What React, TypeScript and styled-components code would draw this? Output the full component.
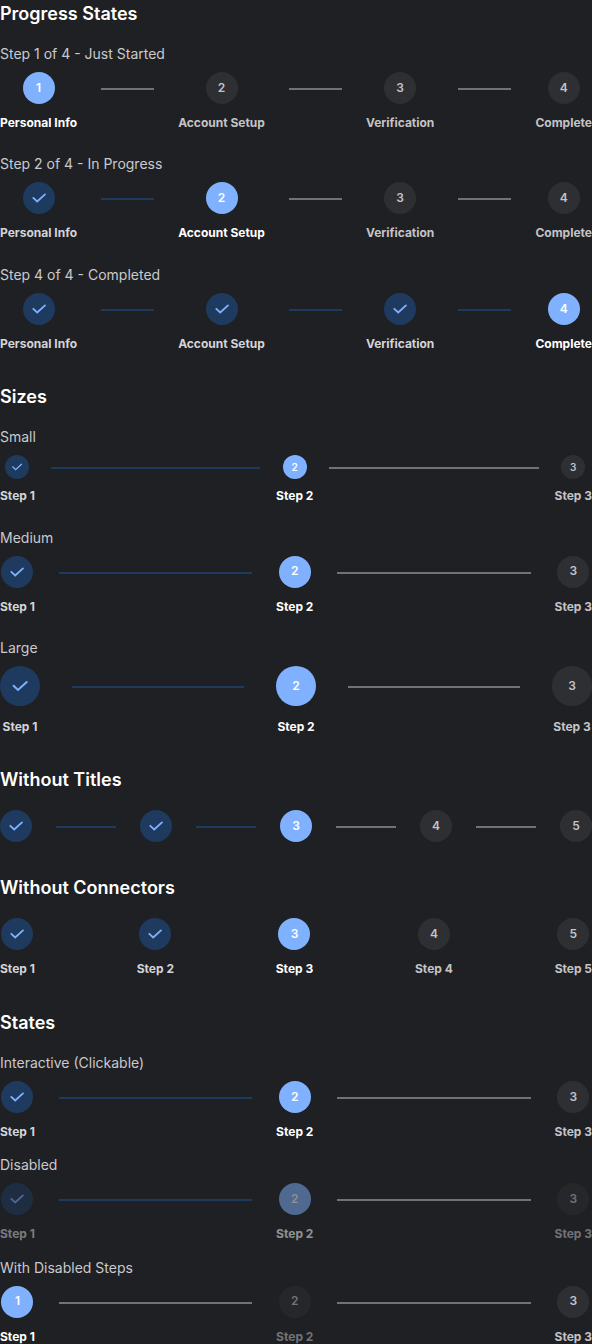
import React from "react";
import styled, { createGlobalStyle } from "styled-components";

type Size = "small" | "medium" | "large";
type Status = "completed" | "active" | "pending";

const metrics = {
  small: { circle: 24, gap: 10, connector: 16, font: 10, icon: 12 },
  medium: { circle: 32, gap: 12, connector: 24, font: 12, icon: 16 },
  large: { circle: 40, gap: 14, connector: 32, font: 12, icon: 18 },
};

const circleColor = { completed: "#1e3a5f", active: "#80b1ff", pending: "#2e2f33" };
const numberColor = { completed: "#80b1ff", active: "#ffffff", pending: "#c4c4c8" };
const titleColor = { completed: "#d4d4d8", active: "#ffffff", pending: "#c4c4c8" };

const GlobalStyle = createGlobalStyle`
  body {
    margin: 0;
    background: #1f2023;
    font-family: Inter, "Liberation Sans", sans-serif;
    overflow-x: hidden;
  }
`;

const Page = styled.main`
  display: flex;
  flex-direction: column;
  gap: 32px;
  height: 1344px;
  overflow: hidden;
`;

const SectionBox = styled.section<{ $gap: number }>`
  display: flex;
  flex-direction: column;
  flex-shrink: 0;
  gap: ${(p) => p.$gap}px;
`;

const Heading = styled.h3<{ $gap: number }>`
  margin: 0 0 ${(p) => 16 - p.$gap}px;
  font-size: 18px;
  line-height: 28px;
  font-weight: 600;
  color: #ffffff;
`;

const Group = styled.div`
  display: flex;
  flex-direction: column;
  gap: 8px;
`;

const Label = styled.p`
  margin: 0;
  font-size: 14px;
  line-height: 20px;
  font-weight: 400;
  color: #c9c9ce;
`;

const StepperRow = styled.div`
  display: flex;
  align-items: flex-start;
  justify-content: space-between;
`;

const StepItem = styled.div<{ $size: Size; $disabled: boolean }>`
  display: flex;
  flex-direction: column;
  align-items: center;
  flex-shrink: 0;
  gap: ${(p) => metrics[p.$size].gap}px;
  opacity: ${(p) => (p.$disabled ? 0.5 : 1)};
`;

const Circle = styled.div<{ $size: Size; $status: Status }>`
  display: flex;
  align-items: center;
  justify-content: center;
  width: ${(p) => metrics[p.$size].circle}px;
  height: ${(p) => metrics[p.$size].circle}px;
  border-radius: 50%;
  background: ${(p) => circleColor[p.$status]};
  color: ${(p) => numberColor[p.$status]};
  font-size: ${(p) => metrics[p.$size].font}px;
  line-height: 1.2;
  font-weight: 600;
`;

const Title = styled.span<{ $status: Status }>`
  font-size: 12px;
  line-height: 14.4px;
  font-weight: 700;
  white-space: nowrap;
  color: ${(p) => titleColor[p.$status]};
`;

const Connector = styled.div<{ $size: Size; $done: boolean }>`
  flex: 1;
  height: 2px;
  margin: ${(p) => metrics[p.$size].circle / 2}px ${(p) => metrics[p.$size].connector}px 0;
  background: ${(p) => (p.$done ? "#1e3a5f" : "#71717a")};
`;

function CheckMark({ size }: { size: number }) {
  return (
    <svg
      width={size}
      height={size}
      viewBox="0 0 16 16"
      fill="none"
      stroke="currentColor"
      strokeWidth="1.8"
      strokeLinecap="round"
    >
      <path d="M2.3 7.8 L6.2 11.5 L14 4.4" />
    </svg>
  );
}

interface StepperProps {
  count?: number;
  titles?: string[];
  current: number;
  size?: Size;
  connectors?: boolean;
  disabled?: number[];
}

function Stepper({ count, titles, current, size = "medium", connectors = true, disabled = [] }: StepperProps) {
  const total = titles ? titles.length : count ?? 0;
  return (
    <StepperRow>
      {Array.from({ length: total }, (_, i) => {
        const n = i + 1;
        const status: Status = n < current ? "completed" : n === current ? "active" : "pending";
        return (
          <React.Fragment key={n}>
            <StepItem $size={size} $disabled={disabled.includes(n)}>
              <Circle $size={size} $status={status}>
                {status === "completed" ? <CheckMark size={metrics[size].icon} /> : n}
              </Circle>
              {titles && <Title $status={status}>{titles[i]}</Title>}
            </StepItem>
            {connectors && n < total && <Connector $size={size} $done={n < current} />}
          </React.Fragment>
        );
      })}
    </StepperRow>
  );
}

function Section({ title, gap = 24, children }: { title: string; gap?: number; children: React.ReactNode }) {
  return (
    <SectionBox $gap={gap}>
      <Heading $gap={gap}>{title}</Heading>
      {children}
    </SectionBox>
  );
}

function Example({ label, ...stepper }: StepperProps & { label: string }) {
  return (
    <Group>
      <Label>{label}</Label>
      <Stepper {...stepper} />
    </Group>
  );
}

const signup = ["Personal Info", "Account Setup", "Verification", "Complete"];
const three = ["Step 1", "Step 2", "Step 3"];
const five = [...three, "Step 4", "Step 5"];

export default function App() {
  return (
    <Page>
      <GlobalStyle />
      <Section title="Progress States">
        <Example label="Step 1 of 4 - Just Started" titles={signup} current={1} />
        <Example label="Step 2 of 4 - In Progress" titles={signup} current={2} />
        <Example label="Step 4 of 4 - Completed" titles={signup} current={4} />
      </Section>
      <Section title="Sizes">
        <Example label="Small" titles={three} current={2} size="small" />
        <Example label="Medium" titles={three} current={2} />
        <Example label="Large" titles={three} current={2} size="large" />
      </Section>
      <Section title="Without Titles">
        <Stepper count={5} current={3} />
      </Section>
      <Section title="Without Connectors">
        <Stepper titles={five} current={3} connectors={false} />
      </Section>
      <Section title="States" gap={16}>
        <Example label="Interactive (Clickable)" titles={three} current={2} />
        <Example label="Disabled" titles={three} current={2} disabled={[1, 2, 3]} />
        <Example label="With Disabled Steps" titles={three} current={1} disabled={[2]} />
      </Section>
    </Page>
  );
}
